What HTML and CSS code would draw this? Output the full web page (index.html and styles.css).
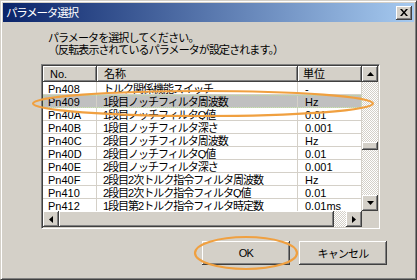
FILE: index.html
```html
<!DOCTYPE html>
<html lang="ja">
<head>
    <meta charset="UTF-8">
    <title>パラメータ選択</title>
    <link rel="stylesheet" href="styles.css">
</head>
<body>

<div class="window">
    <div class="titlebar">
        <span class="title">パラメータ選択</span>
        <span class="close-btn">
            <svg width="8" height="7" viewBox="0 0 8 7"><path d="M0 0h2l2 2.5L6 0h2L5 3.5 8 7H6L4 4.5 2 7H0l3-3.5z" fill="#000"/></svg>
        </span>
    </div>

    <div class="content">
        <div class="message">
            <div>パラメータを選択してください。</div>
            <div>（反転表示されているパラメータが設定されます。）</div>
        </div>

        <div class="listbox">
            <div class="list-main">
                <div class="list-view">
                    <div class="row header">
                        <div class="cell col-no">No.</div>
                        <div class="cell col-name">名称</div>
                        <div class="cell col-unit">単位</div>
                    </div>
                    <div class="row"><div class="cell col-no">Pn408</div><div class="cell col-name">トルク関係機能スイッチ</div><div class="cell col-unit">-</div></div>
                    <div class="row selected"><div class="cell col-no">Pn409</div><div class="cell col-name">1段目ノッチフィルタ周波数</div><div class="cell col-unit">Hz</div></div>
                    <div class="row"><div class="cell col-no">Pn40A</div><div class="cell col-name">1段目ノッチフィルタQ値</div><div class="cell col-unit">0.01</div></div>
                    <div class="row"><div class="cell col-no">Pn40B</div><div class="cell col-name">1段目ノッチフィルタ深さ</div><div class="cell col-unit">0.001</div></div>
                    <div class="row"><div class="cell col-no">Pn40C</div><div class="cell col-name">2段目ノッチフィルタ周波数</div><div class="cell col-unit">Hz</div></div>
                    <div class="row"><div class="cell col-no">Pn40D</div><div class="cell col-name">2段目ノッチフィルタQ値</div><div class="cell col-unit">0.01</div></div>
                    <div class="row"><div class="cell col-no">Pn40E</div><div class="cell col-name">2段目ノッチフィルタ深さ</div><div class="cell col-unit">0.001</div></div>
                    <div class="row"><div class="cell col-no">Pn40F</div><div class="cell col-name">2段目2次トルク指令フィルタ周波数</div><div class="cell col-unit">Hz</div></div>
                    <div class="row"><div class="cell col-no">Pn410</div><div class="cell col-name">2段目2次トルク指令フィルタQ値</div><div class="cell col-unit">0.01</div></div>
                    <div class="row"><div class="cell col-no">Pn412</div><div class="cell col-name">1段目第2トルク指令フィルタ時定数</div><div class="cell col-unit">0.01ms</div></div>
                </div>
                <div class="vscroll">
                    <div class="sb-btn"><svg width="7" height="4" viewBox="0 0 7 4"><path d="M3.5 0L7 4H0z" fill="#000"/></svg></div>
                    <div class="track v-track-top"></div>
                    <div class="thumb v-thumb"></div>
                    <div class="track v-track-bottom"></div>
                    <div class="sb-btn"><svg width="7" height="4" viewBox="0 0 7 4"><path d="M0 0h7L3.5 4z" fill="#000"/></svg></div>
                </div>
            </div>
            <div class="hscroll-row">
                <div class="sb-btn"><svg width="4" height="7" viewBox="0 0 4 7"><path d="M4 0v7L0 3.5z" fill="#000"/></svg></div>
                <div class="thumb h-thumb"></div>
                <div class="track h-track"></div>
                <div class="sb-btn"><svg width="4" height="7" viewBox="0 0 4 7"><path d="M0 0l4 3.5L0 7z" fill="#000"/></svg></div>
                <div class="corner"></div>
            </div>
        </div>

        <div class="buttons">
            <button class="btn">OK</button>
            <button class="btn">キャンセル</button>
        </div>
    </div>

    <!-- 注記の丸印 -->
    <svg class="marks" width="417" height="280" viewBox="0 0 417 280">
        <ellipse cx="203" cy="103.5" rx="170" ry="12.5" fill="none" stroke="#f0a040" stroke-width="2.2"/>
        <ellipse cx="246" cy="253" rx="51" ry="16" fill="none" stroke="#f0a040" stroke-width="2.2"/>
    </svg>
</div>

</body>
</html>
```

FILE: styles.css
```css
/* ダイアログ全体 */
body {
    margin: 0;
    background-color: #d4d0c8;
    font-family: "Liberation Sans", "Noto Sans CJK JP", sans-serif;
    font-size: 11px;
}
.window {
    position: relative;
    box-sizing: border-box;
    width: 417px;
    height: 280px;
    border: 1px solid;
    border-color: #d4d0c8 #404040 #404040 #d4d0c8;
    box-shadow: inset 1px 1px #fff, inset -1px -1px #808080;
    padding: 2px;
    display: flex;
    flex-direction: column;
    background-color: #d4d0c8;
    overflow: hidden;
}
.titlebar {
    height: 19px;
    background: linear-gradient(to right, #0a246a, #a6caf0);
    display: flex;
    align-items: center;
    justify-content: space-between;
    padding: 0 2px 0 3px;
}
.title {
    color: #fff;
    font-size: 11.5px;
    letter-spacing: -1.2px;
    line-height: 14px;
}
.close-btn {
    box-sizing: border-box;
    width: 16px;
    height: 14px;
    background-color: #d4d0c8;
    box-shadow: inset -1px -1px #404040, inset 1px 1px #fff, inset -2px -2px #808080;
    display: flex;
    align-items: center;
    justify-content: center;
}
.content {
    display: flex;
    flex-direction: column;
    padding: 10px 27px 0 38px;
}
.message {
    padding-left: 7px;
    line-height: 12px;
    letter-spacing: -0.9px;
    font-size: 11px;
    margin-bottom: 8px;
}

/* リスト */
.listbox {
    width: 339px;
    height: 165px;
    box-sizing: border-box;
    border: 1px solid;
    border-color: #808080 #fff #fff #808080;
    box-shadow: inset 1px 1px #404040, inset -1px -1px #d4d0c8;
    padding: 1px;
    display: flex;
    flex-direction: column;
}
.list-main {
    flex: 1;
    display: flex;
    overflow: hidden;
    background-color: #fff;
}
.list-view {
    width: 319px;
    overflow: hidden;
}
.row {
    display: flex;
    height: 13px;
    line-height: 14px;
    border-bottom: 1px solid #d4d0c8;
    box-sizing: border-box;
}
.row.header {
    height: 16px;
    line-height: 16px;
    border-bottom: 0;
    background-color: #d4d0c8;
}
.row.header .cell {
    box-shadow: inset -1px -1px #404040, inset 1px 1px #fff, inset -2px -2px #808080;
    border-right: 0;
    padding-left: 7px;
    letter-spacing: 0;
}
.row.selected {
    background-color: #c0c0c0;
    outline: 1px dotted #b8dca0;
    outline-offset: -1px;
}
.cell {
    box-sizing: border-box;
    white-space: nowrap;
    overflow: hidden;
    border-right: 1px solid #d4d0c8;
    padding-left: 6px;
}
.col-no {
    width: 54px;
    padding-left: 5px;
}
.col-name {
    width: 201px;
    letter-spacing: -1px;
}
.col-unit {
    width: 64px;
    padding-left: 7px;
}
.row.header .col-unit {
    padding-left: 5px;
}

/* スクロールバー */
.vscroll {
    width: 16px;
    display: flex;
    flex-direction: column;
}
.sb-btn {
    width: 16px;
    height: 16px;
    box-sizing: border-box;
    background-color: #d4d0c8;
    box-shadow: inset -1px -1px #404040, inset 1px 1px #fff, inset -2px -2px #808080;
    display: flex;
    align-items: center;
    justify-content: center;
    flex-shrink: 0;
}
.track {
    background: repeating-conic-gradient(#fff 0 25%, #d4d0c8 0 50%) 0 0 / 2px 2px;
}
.thumb {
    background-color: #d4d0c8;
    box-shadow: inset -1px -1px #404040, inset 1px 1px #fff, inset -2px -2px #808080;
}
.v-track-top {
    height: 60px;
}
.v-thumb {
    height: 8px;
}
.v-track-bottom {
    flex: 1;
}
.hscroll-row {
    height: 16px;
    display: flex;
}
.h-thumb {
    width: 275px;
}
.h-track {
    flex: 1;
}
.corner {
    width: 16px;
    background-color: #d4d0c8;
}

/* ボタン */
.buttons {
    display: flex;
    justify-content: flex-end;
    gap: 9px;
    margin-top: 12px;
}
.btn {
    width: 88px;
    height: 24px;
    font-family: "Liberation Sans", "Noto Sans CJK JP", sans-serif;
    font-size: 11px;
    letter-spacing: -0.8px;
    color: #000;
    background-color: #d4d0c8;
    border: 0;
    box-shadow: inset -1px -1px #404040, inset 1px 1px #fff, inset -2px -2px #808080;
    padding: 0;
}

/* 注記 */
.marks {
    position: absolute;
    left: -1px;
    top: -1px;
    pointer-events: none;
}
```
